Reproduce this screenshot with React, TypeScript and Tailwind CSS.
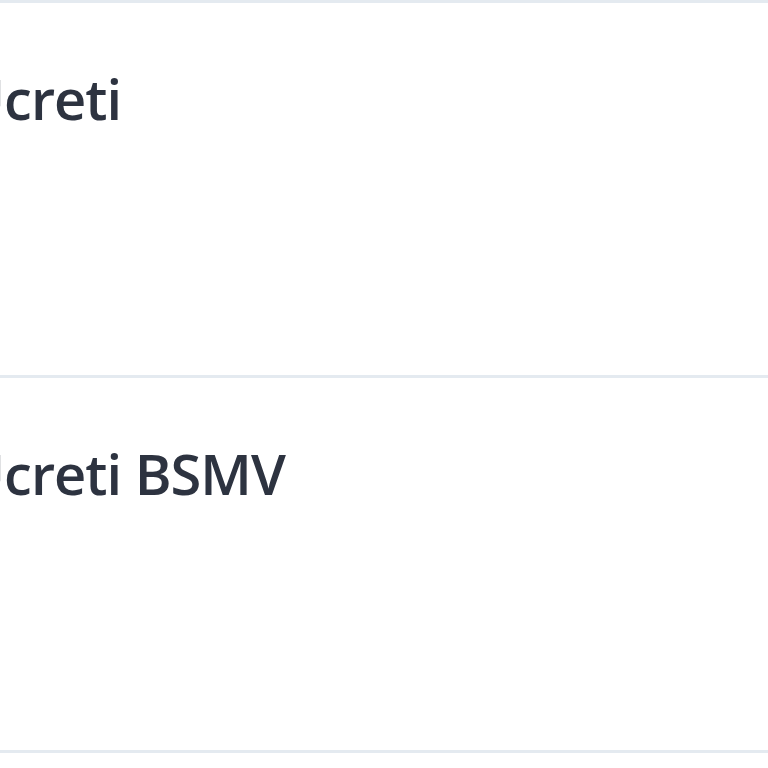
import React from "react";

const rows = ["Ücreti", "Ücreti BSMV"];

const App: React.FC = () => {
  return (
    <div className="h-[768px] w-[768px] overflow-hidden bg-white font-['Open_Sans',sans-serif]">
      <div className="border-t-[3px] border-[#e4eaf0]">
        {rows.map((label) => (
          <div
            key={label}
            className="h-[375px] border-b-[3px] border-[#e4eaf0] pt-[63px]"
          >
            <h2 className="ml-[-36.5px] whitespace-nowrap text-[56px] leading-[64px] font-semibold tracking-[-1px] text-[#2d3340]">
              {label}
            </h2>
          </div>
        ))}
      </div>
    </div>
  );
};

export default App;
